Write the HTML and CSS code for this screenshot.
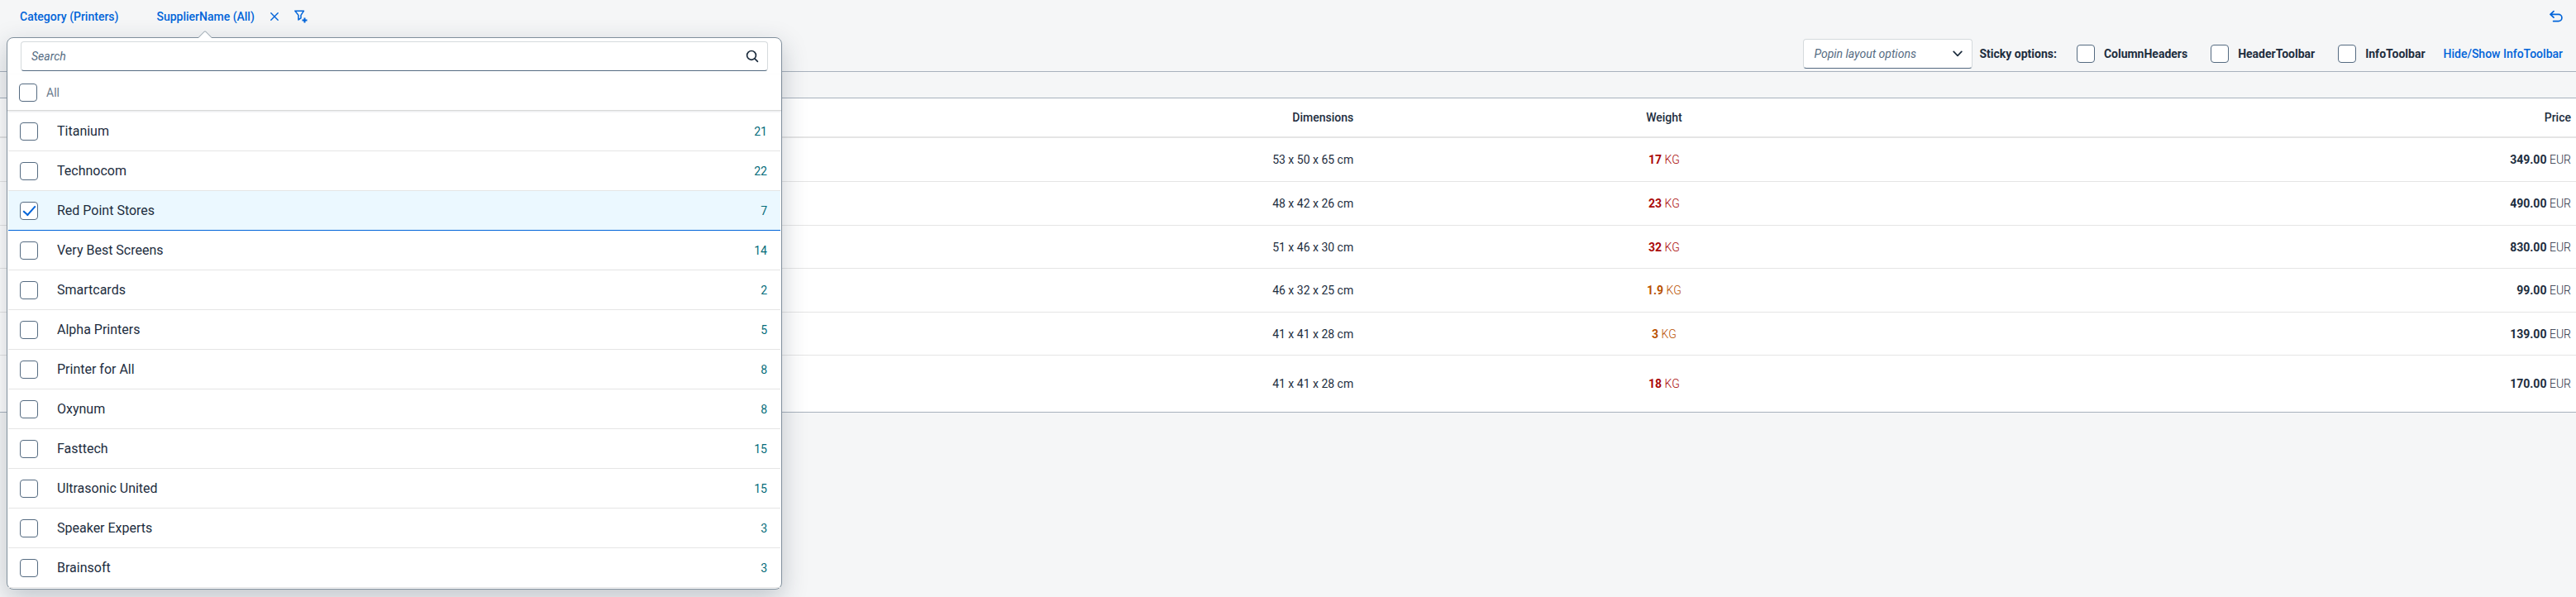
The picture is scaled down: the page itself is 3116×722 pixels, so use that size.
FILE: index.html
```html
<!DOCTYPE html>
<html lang="en">
<head>
<meta charset="utf-8">
<title>Products</title>
<link rel="stylesheet" href="styles.css">
</head>
<body>
<header class="facets">
  <button class="facet" type="button">Category (Printers)</button>
  <button class="facet" type="button" aria-expanded="true">SupplierName (All)</button>
  <button class="icon-button" type="button" aria-label="Remove filter">
    <svg width="16" height="16" viewBox="0 0 16 16" fill="none" stroke="currentColor" stroke-width="1.4" stroke-linecap="round"><path d="M3.800 3.800l8.400 8.400M12.200 3.800l-8.400 8.400"/></svg>
  </button>
  <button class="icon-button" type="button" aria-label="Add filter">
    <svg width="16" height="16" viewBox="0 0 16 16" fill="none" stroke="currentColor" stroke-width="1.5" stroke-linejoin="round" stroke-linecap="round"><path d="M.9 1.200h10.600L8 6.400v3.400L5 12V6.400z"/><path d="M12.500 9.500v6M9.500 12.500h6" stroke-width="2" stroke-linecap="butt"/></svg>
  </button>
  <button class="icon-button reset" type="button" aria-label="Reset">
    <svg width="16" height="16" viewBox="0 0 16 16" fill="none" stroke="currentColor" stroke-width="1.7" stroke-linejoin="round" stroke-linecap="round"><path d="M5 1.600L1 5.400l4 3.800M1.200 5.400h9.600a4.100 4.100 0 0 1 0 8.200H4.600"/></svg>
  </button>
</header>

<main>
  <div class="toolbar">
    <div class="select-wrap">
      <select class="select" aria-label="Popin layout options"><option>Popin layout options</option></select>
      <svg class="chevron" width="12" height="8" viewBox="0 0 12 8" fill="none" stroke="currentColor" stroke-width="1.7" stroke-linecap="round" stroke-linejoin="round"><path d="M1.200 1.400L6 6.400l4.800-5"/></svg>
    </div>
    <span class="toolbar-label">Sticky options:</span>
    <label class="option"><input class="box" type="checkbox">ColumnHeaders</label>
    <label class="option"><input class="box" type="checkbox">HeaderToolbar</label>
    <label class="option"><input class="box" type="checkbox">InfoToolbar</label>
    <button class="text-button" type="button">Hide/Show InfoToolbar</button>
  </div>
  <div class="info-bar"></div>
  <table class="products">
    <colgroup><col class="col-lead"><col class="col-dim"><col class="col-side"><col class="col-side"></colgroup>
    <thead>
      <tr><td></td><th class="end">Dimensions</th><th class="center">Weight</th><th class="end">Price</th></tr>
    </thead>
    <tbody>
      <tr><td></td><td class="end">53 x 50 x 65 cm</td><td class="center error"><b>17</b> <span class="unit">KG</span></td><td class="end"><b>349.00</b> <span class="unit">EUR</span></td></tr>
      <tr><td></td><td class="end">48 x 42 x 26 cm</td><td class="center error"><b>23</b> <span class="unit">KG</span></td><td class="end"><b>490.00</b> <span class="unit">EUR</span></td></tr>
      <tr><td></td><td class="end">51 x 46 x 30 cm</td><td class="center error"><b>32</b> <span class="unit">KG</span></td><td class="end"><b>830.00</b> <span class="unit">EUR</span></td></tr>
      <tr><td></td><td class="end">46 x 32 x 25 cm</td><td class="center warning"><b>1.9</b> <span class="unit">KG</span></td><td class="end"><b>99.00</b> <span class="unit">EUR</span></td></tr>
      <tr><td></td><td class="end">41 x 41 x 28 cm</td><td class="center warning"><b>3</b> <span class="unit">KG</span></td><td class="end"><b>139.00</b> <span class="unit">EUR</span></td></tr>
      <tr><td></td><td class="end">41 x 41 x 28 cm</td><td class="center error"><b>18</b> <span class="unit">KG</span></td><td class="end"><b>170.00</b> <span class="unit">EUR</span></td></tr>
    </tbody>
  </table>
</main>

<section class="popover" aria-label="SupplierName">
  <svg class="arrow" width="16" height="9" viewBox="0 0 16 9"><path d="M0 9L7.500 1h1L16 9z" fill="#fff"/><path d="M.5 8L7.400 1h1.200L15.500 8" fill="none" stroke="#8b9aa5"/></svg>
  <div class="search">
    <input class="search-input" type="search" placeholder="Search" aria-label="Search">
    <svg width="16" height="16" viewBox="0 0 16 16" fill="none" stroke="currentColor" stroke-width="1.7" stroke-linecap="round"><circle cx="7" cy="6.900" r="5.400"/><path d="M10.900 10.900l3.500 3.500"/></svg>
  </div>
  <label class="all"><input class="box" type="checkbox">All</label>
  <ul class="list">
    <li><label class="item"><input class="box" type="checkbox"><span class="name">Titanium</span><span class="count">21</span></label></li>
    <li><label class="item"><input class="box" type="checkbox"><span class="name">Technocom</span><span class="count">22</span></label></li>
    <li><label class="item selected"><input class="box" type="checkbox" checked><span class="name">Red Point Stores</span><span class="count">7</span></label></li>
    <li><label class="item"><input class="box" type="checkbox"><span class="name">Very Best Screens</span><span class="count">14</span></label></li>
    <li><label class="item"><input class="box" type="checkbox"><span class="name">Smartcards</span><span class="count">2</span></label></li>
    <li><label class="item"><input class="box" type="checkbox"><span class="name">Alpha Printers</span><span class="count">5</span></label></li>
    <li><label class="item"><input class="box" type="checkbox"><span class="name">Printer for All</span><span class="count">8</span></label></li>
    <li><label class="item"><input class="box" type="checkbox"><span class="name">Oxynum</span><span class="count">8</span></label></li>
    <li><label class="item"><input class="box" type="checkbox"><span class="name">Fasttech</span><span class="count">15</span></label></li>
    <li><label class="item"><input class="box" type="checkbox"><span class="name">Ultrasonic United</span><span class="count">15</span></label></li>
    <li><label class="item"><input class="box" type="checkbox"><span class="name">Speaker Experts</span><span class="count">3</span></label></li>
    <li><label class="item"><input class="box" type="checkbox"><span class="name">Brainsoft</span><span class="count">3</span></label></li>
  </ul>
</section>
</body>
</html>
```
FILE: styles.css
```css
* { box-sizing: border-box; }

body {
  margin: 0;
  min-height: 100vh;
  background: #f5f6f7;
  color: #1d2d3e;
  font: 14px/20px Roboto, "Liberation Sans", sans-serif;
  position: relative;
}

button {
  border: 0;
  padding: 0;
  background: none;
  color: #0064d9;
  font: inherit;
  font-weight: 500;
  white-space: nowrap;
}

svg { display: block; flex: none; }

.facets {
  display: flex;
  align-items: center;
  height: 43px;
  padding: 0 16px 4px 24px;
}
.facet + .facet { margin-left: 46px; }
.icon-button { margin-left: 16px; }
.icon-button.reset { margin-left: auto; }

.toolbar {
  display: flex;
  align-items: center;
  justify-content: flex-end;
  height: 44px;
  padding-right: 16px;
  border-bottom: 1px solid #a8b2bd;
}
.select-wrap { position: relative; margin-right: 8px; }
.select {
  display: block;
  appearance: none;
  width: 205px;
  height: 36px;
  padding: 0 36px 0 12px;
  border: 1px solid #d5dadd;
  border-bottom-color: #556b81;
  border-radius: 4px;
  background: #fff;
  color: #556b82;
  font: inherit;
  font-style: italic;
}
.chevron { position: absolute; right: 12px; top: 14px; pointer-events: none; }
.toolbar-label, .option { font-weight: 700; white-space: nowrap; }
.toolbar-label { margin-right: 24px; }
.option { display: flex; align-items: center; gap: 11px; margin-right: 28px; }
.option:last-of-type { margin-right: 22px; }

.box {
  appearance: none;
  flex: none;
  display: grid;
  place-items: center;
  width: 22px;
  height: 22px;
  margin: 0;
  border: 1px solid #556b81;
  border-radius: 4px;
  background: #fff;
}
.box:checked::after {
  content: "";
  width: 13px;
  height: 6px;
  margin-bottom: 4px;
  border: solid #0064d9;
  border-width: 0 0 2px 2px;
  transform: rotate(-48deg);
}

.info-bar { height: 32px; border-bottom: 1px solid #a8b2bd; }

.products {
  width: 100%;
  table-layout: fixed;
  border-spacing: 0;
  background: #fff;
}
.col-lead { width: 29.1%; }
.col-dim { width: 23.7%; }
.col-side { width: 23.6%; }
.products th, .products td {
  height: 53px;
  padding: 0 8px;
  border-bottom: 1px solid #e5e5e5;
  white-space: nowrap;
}
.products thead th, .products thead td { height: 48px; font-weight: 500; border-bottom-width: 2px; }
.products tbody tr:nth-child(2n+3) td { height: 52px; }
.products tbody tr:last-child td { height: 69px; border-bottom-color: #a8b2bd; }
.products tr > :last-child { padding-right: 6px; }
.products .end { text-align: right; }
.products .center { text-align: center; }
.error { color: #aa0808; }
.warning { color: #b95100; }
.unit { font-weight: 300; }

.popover {
  position: absolute;
  top: 45px;
  left: 8px;
  width: 938px;
  max-width: calc(100% - 16px);
  border: 1px solid #808f9c;
  border-radius: 8px;
  background: #fff;
  box-shadow: 0 10px 30px rgba(34, 53, 72, .25);
}
.arrow { position: absolute; left: 231px; top: -9px; }
.search {
  display: flex;
  align-items: center;
  height: 36px;
  margin: 4px 16px;
  padding: 0 10px 0 12px;
  border: 1px solid #d5dadd;
  border-bottom-color: #556b81;
  border-radius: 4px;
}
.search-input {
  flex: 1;
  min-width: 0;
  padding: 0;
  border: 0;
  outline: 0;
  background: none;
  color: inherit;
  font: inherit;
}
.search-input::placeholder { color: #556b82; font-style: italic; opacity: 1; }
.all {
  display: flex;
  align-items: center;
  gap: 11px;
  height: 44px;
  padding: 0 14px;
  border-bottom: 1px solid #d9d9d9;
  box-shadow: 0 1px 2px rgba(34, 53, 72, .12);
  color: #6a7a8c;
}
.list { margin: 0; padding: 1px; list-style: none; }
.item {
  display: flex;
  align-items: center;
  height: 48px;
  padding: 0 16px 0 14px;
  border-bottom: 1px solid #e5e5e5;
}
.item.selected { background: #ebf8ff; border-bottom-color: #0064d9; }
.name { flex: 1; margin-left: 23px; font-size: 16px; }
.count { color: #046c7a; }
```
